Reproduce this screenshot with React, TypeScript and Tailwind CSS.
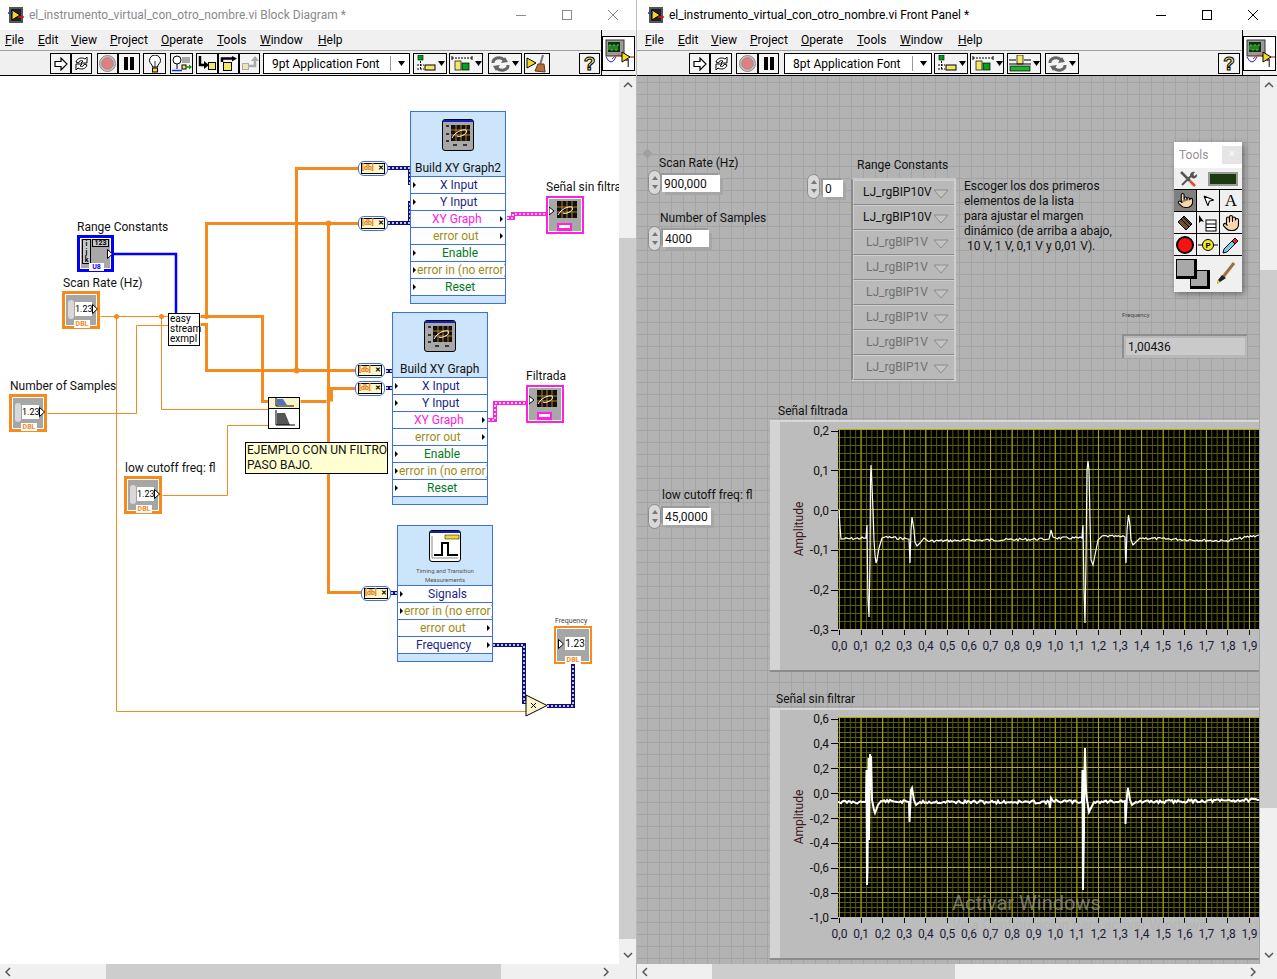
// App.tsx
import { ReactNode } from 'react';
import { Hand, MousePointer2, Pointer } from 'lucide-react';

const menus = [
  { name: 'File', width: 'w-[33px]' },
  { name: 'Edit', width: 'w-[33px]' },
  { name: 'View', width: 'w-[39px]' },
  { name: 'Project', width: 'w-[51px]' },
  { name: 'Operate', width: 'w-[56px]' },
  { name: 'Tools', width: 'w-[43px]' },
  { name: 'Window', width: 'w-[58px]' },
  { name: 'Help', width: 'w-[30px]' },
];

function Menu({ className }: { className: string }) {
  return (
    <div className={`flex h-[19px] items-center text-[12px] text-black ${className}`}>
      {menus.map((m) => (
        <span key={m.name} className={m.width}>
          <span className="underline">{m.name[0]}</span>
          {m.name.slice(1)}
        </span>
      ))}
    </div>
  );
}

function TitleBar({
  title,
  active,
  iconClass,
  controlsClass,
}: {
  title: string;
  active: boolean;
  iconClass: string;
  controlsClass: string;
}) {
  const c = active ? '#000000' : '#8a8a8a';
  return (
    <div className="flex h-[30px] shrink-0 items-center bg-white">
      <div className={iconClass}>
        <svg width="16" height="16" viewBox="0 0 16 16">
          <rect x="1" y="0" width="14" height="16" fill="#555" />
          <rect x="3" y="2" width="10" height="12" fill="#222" />
          <path d="M4 3v10l8-5z" fill="#f5d820" stroke="#000" />
          <path d="M0 6h5" stroke="#1030e0" strokeWidth="1.5" />
          <path d="M10 10h6" stroke="#e01010" strokeWidth="1.5" />
        </svg>
      </div>
      <span className="ml-[5px] grow text-[12px]" style={{ color: c }}>
        {title}
      </span>
      <svg width="110" height="14" viewBox="0 0 110 14" stroke={c} fill="none" className={`shrink-0 ${controlsClass}`}>
        <path d="M0 7.5h10" />
        <rect x="46.5" y="2.5" width="9" height="9" />
        <path d="M92 2l10 10M102 2l-10 10" />
      </svg>
    </div>
  );
}

function TB({ children, className = '' }: { children: ReactNode; className?: string }) {
  return (
    <div className={`flex h-[21px] items-center justify-center border border-black bg-[#f4f4f4] ${className}`}>
      {children}
    </div>
  );
}

const RunIcon = () => (
  <svg width="14" height="14" viewBox="0 0 14 14" fill="white" stroke="black" strokeWidth="1.2">
    <path d="M1 4.5h6V1l6 6-6 6V9.5H1z" />
  </svg>
);
const LoopIcon = () => (
  <svg width="17" height="17" viewBox="0 0 17 17" fill="white" stroke="black">
    <path d="M3 7c1-4 6-5 9-3l2-2v6H8l2-2c-2-1-4 0-4.500 2zM14 10c-1 4-6 5-9 3l-2 2V9h6l-2 2c2 1 4 0 4.500-2z" />
  </svg>
);
const RecordIcon = () => (
  <svg width="17" height="17" viewBox="0 0 17 17">
    <circle cx="8.5" cy="8.500" r="8" fill="#c4c4c4" stroke="#8a8a8a" />
    <circle cx="8.500" cy="8.500" r="5.800" fill="#e07f7f" stroke="#a88" />
  </svg>
);
const PauseIcon = () => (
  <svg width="12" height="13" viewBox="0 0 12 13" fill="black">
    <rect x="1" y="0" width="4" height="13" />
    <rect x="7" y="0" width="4" height="13" />
  </svg>
);
const BulbIcon = () => (
  <svg width="14" height="18" viewBox="0 0 14 18" fill="white" stroke="black">
    <path d="M4.500 12c0-3-3-3.500-3-6.500a5.500 5.500 0 0 1 11 0c0 3-3 3.500-3 6.500z" />
    <path d="M7 6v6" strokeWidth=".8" />
    <rect x="4.500" y="13" width="5" height="4" fill="#f5d820" />
  </svg>
);
const ProbeIcon = () => (
  <svg width="20" height="18" viewBox="0 0 20 18" fill="none">
    <circle cx="5" cy="5" r="4" fill="white" stroke="black" />
    <path d="M5 9v5" stroke="black" />
    <rect x="10" y="2" width="8" height="6" fill="#a8a8a8" />
    <rect x="10" y="10" width="4" height="4" fill="#f5e66a" stroke="black" />
    <path d="M0 15.500h10" stroke="#1030e0" strokeWidth="1.500" />
    <path d="M14 12h4" stroke="#109010" strokeWidth="1.500" />
    <path d="M17 9.500l3 2.500-3 2.500z" fill="#109010" />
  </svg>
);
const StepIn = () => (
  <svg width="18" height="16" viewBox="0 0 18 16">
    <path d="M2 0v9h5" fill="none" stroke="black" strokeWidth="2.500" />
    <path d="M6 5l5 4-5 4z" fill="black" />
    <rect x="10.500" y="6.500" width="7" height="7" fill="#f5e66a" stroke="black" />
  </svg>
);
const StepOver = () => (
  <svg width="18" height="16" viewBox="0 0 18 16">
    <path d="M2 6V2.500h12" fill="none" stroke="black" strokeWidth="2.500" />
    <path d="M12 0l5 2.500-5 3z" fill="black" />
    <rect x="3.500" y="6.500" width="8" height="8" fill="#f5e66a" stroke="black" />
  </svg>
);
const StepOut = () => (
  <svg width="18" height="16" viewBox="0 0 18 16">
    <path d="M8 10h6V4" fill="none" stroke="#aaa" strokeWidth="2.500" />
    <path d="M10 5l4-5 4 5z" fill="#aaa" />
    <rect x="1.500" y="7.500" width="6" height="6" fill="#eee6b0" stroke="#aaa" />
  </svg>
);
const Caret = () => (
  <svg width="7" height="5" viewBox="0 0 7 5" className="ml-[2px]">
    <path d="M0 0h7L3.500 5z" fill="black" />
  </svg>
);
const AlignIcon = () => (
  <svg width="20" height="17" viewBox="0 0 20 17">
    <rect x="2" y="0" width="5" height="5" fill="#00a020" stroke="black" strokeWidth=".6" />
    <path d="M4.500 6v8M1 10h7M1 14h7" stroke="black" strokeDasharray="2 1" />
    <rect x="9" y="10" width="10" height="5" fill="#f5e66a" stroke="black" />
  </svg>
);
const DistIcon = () => (
  <svg width="22" height="17" viewBox="0 0 22 17">
    <path d="M1 3h20" stroke="black" strokeDasharray="2 1" />
    <path d="M1 1v4M21 1v4" stroke="black" />
    <rect x="4" y="6" width="6" height="9" fill="#f5e66a" stroke="black" strokeWidth=".7" />
    <rect x="11" y="8" width="7" height="7" fill="#00a020" stroke="black" strokeWidth=".7" />
  </svg>
);
const ResizeIcon = () => (
  <svg width="22" height="17" viewBox="0 0 22 17">
    <rect x="8" y="0" width="6" height="9" fill="#f5e66a" stroke="black" strokeWidth=".7" />
    <path d="M0 5h7M22 5h-7M0 9h22" stroke="black" />
    <rect x="1" y="11" width="20" height="5" fill="#20b030" stroke="black" strokeWidth=".7" />
  </svg>
);
const ReorderIcon = () => (
  <svg width="19" height="16" viewBox="0 0 19 16">
    <path d="M2 7a6 5 0 0 1 11-3" fill="none" stroke="#666" strokeWidth="3" />
    <path d="M10 7l7-1-3-5z" fill="#666" />
    <path d="M17 9a6 5 0 0 1-11 3" fill="none" stroke="#666" strokeWidth="3" />
    <path d="M9 9l-7 1 3 5z" fill="#666" />
  </svg>
);
const CleanupIcon = () => (
  <svg width="22" height="18" viewBox="0 0 22 18">
    <path d="M1 3l9 5-9 5z" fill="#f5d820" stroke="black" />
    <path d="M17 0l-3 10" stroke="#777" strokeWidth="2" />
    <path d="M9 16l3-7h6l1 8z" fill="#b07040" stroke="#603810" />
  </svg>
);
const HelpIcon = () => (
  <span className="text-[19px] leading-none font-bold text-[#f2e27a] [-webkit-text-stroke:1px_black] [font-family:'Liberation_Sans',sans-serif]">
    ?
  </span>
);

function VIIcon() {
  return (
    <div className="relative h-[35px] w-[33px] border border-black bg-white">
      <svg width="31" height="33" viewBox="0 0 31 33">
        <rect x="3" y="3" width="18" height="16" fill="#9a9a9a" stroke="#333" />
        <rect x="5" y="5" width="12" height="10" fill="#103010" />
        <path d="M6 13V8h2v5h2V8h2v5h2V8h2" fill="none" stroke="#40d040" />
        <path d="M3 20q5 10 10 0" fill="none" stroke="#2020d0" />
        <path d="M9 22q7-8 12 0" fill="none" stroke="#e02020" />
        <path d="M19 15v10l8-5z" fill="#f5d820" stroke="#000" />
        <path d="M27 20h4" stroke="#b00000" />
      </svg>
      <span className="absolute right-[3px] bottom-0 text-[11px] leading-[13px] text-black">1</span>
    </div>
  );
}

function Trim({ children, className = '' }: { children: ReactNode; className?: string }) {
  return <div className={`flex items-center ${className}`}>{children}</div>;
}

function FontRing({ label, className }: { label: string; className: string }) {
  return (
    <div className={`flex h-[21px] items-center border border-black bg-white text-[12px] text-black ${className}`}>
      <span className="ml-[8px] grow whitespace-nowrap">{label}</span>
      <span className="flex h-[15px] w-[19px] items-center justify-center border-l border-[#999]">
        <Caret />
      </span>
    </div>
  );
}

function ScrollV({ thumb }: { thumb: ReactNode }) {
  return (
    <div className="flex w-[17px] shrink-0 flex-col items-center bg-[#f0f0f0]">
      <svg width="10" height="6" viewBox="0 0 10 6" className="mt-[6px] shrink-0">
        <path d="M1 5l4-4 4 4" fill="none" stroke="#555" strokeWidth="1.500" />
      </svg>
      {thumb}
      <svg width="10" height="6" viewBox="0 0 10 6" className="mb-[6px] shrink-0">
        <path d="M1 1l4 4 4-4" fill="none" stroke="#555" strokeWidth="1.500" />
      </svg>
    </div>
  );
}

function NumTerminal({ className }: { className: string }) {
  return (
    <div className={`absolute h-[38px] w-[38px] border-[3px] border-[#f58a1f] bg-white p-px ${className}`}>
      <div className="relative h-full w-full bg-[#a6a6a6]">
        <div className="absolute top-[5px] left-[2px] h-[19px] w-[6px] rounded-full bg-[#d8d8d8]" />
        <div className="absolute top-[7px] left-[9px] h-[14px] w-[17px] bg-white text-center text-[9px] leading-[14px] whitespace-nowrap text-black">
          1.23
        </div>
        <svg width="6" height="10" viewBox="0 0 6 10" className="absolute top-[9px] left-[26px]">
          <path d="M.5.5l5 4.500-5 4.500z" fill="white" stroke="black" />
        </svg>
        <div className="absolute bottom-[-3px] left-[8px] h-[8px] w-[16px] bg-white text-center text-[7px] leading-[8px] font-bold text-[#f58a1f]">
          DBL
        </div>
      </div>
    </div>
  );
}

function IndTerminal({ className }: { className: string }) {
  return (
    <div className={`absolute h-[38px] w-[38px] border-2 border-[#f58a1f] bg-white p-px ${className}`}>
      <div className="relative h-full w-full bg-[#a6a6a6]">
        <svg width="6" height="10" viewBox="0 0 6 10" className="absolute top-[10px] left-px">
          <path d="M.5.5l5 4.500-5 4.500z" fill="white" stroke="black" />
        </svg>
        <div className="absolute top-[8px] left-[8px] h-[13px] w-[20px] bg-white text-center text-[10px] leading-[13px] whitespace-nowrap text-black">
          1.23
        </div>
        <div className="absolute bottom-[-3px] left-[8px] h-[8px] w-[16px] bg-white text-center text-[7px] leading-[8px] font-bold text-[#f58a1f]">
          DBL
        </div>
      </div>
    </div>
  );
}

function GraphIcon({ className }: { className: string }) {
  return (
    <div className={`relative h-[32px] w-[32px] rounded-[3px] border border-black bg-[#a8a8a8] ${className}`}>
      <svg width="30" height="30" viewBox="0 0 30 30" className="absolute top-0 left-0">
        <rect x="0" y="0" width="30" height="2" fill="#1020c0" />
        <rect x="8" y="5" width="19" height="16" fill="#111" />
        <path d="M8 10h19M8 15h19M13 5v16M18 5v16M23 5v16" stroke="#e09a20" strokeWidth=".8" />
        <path d="M9 18c3-6 10-9 14-8 3 3-6 8-9 6" fill="none" stroke="white" />
        <path d="M3 6h3M3 14h3M3 21h3M10 25h4M20 25h4" stroke="#111" strokeWidth="1.500" />
      </svg>
    </div>
  );
}

function ExpressRow({ label, color, pin, ml }: { label: string; color: string; pin: 'l' | 'r'; ml: string }) {
  return (
    <div className="relative flex h-[17px] items-center overflow-hidden border-t border-[#3d6fe8] bg-white text-[12px] whitespace-nowrap">
      <span className={ml} style={{ color }}>
        {label}
      </span>
      {pin === 'l' ? (
        <span className="absolute top-[5px] left-[2px] h-0 w-0 border-y-[3px] border-l-[3px] border-y-transparent border-l-black" />
      ) : (
        <span className="absolute top-[5px] right-[2px] h-0 w-0 border-y-[3px] border-l-[3px] border-y-transparent border-l-black" />
      )}
    </div>
  );
}

function Convert({ className }: { className: string }) {
  return (
    <div className={`absolute flex h-[15px] w-[30px] items-center rounded-[6px] border border-[#3d6fe8] bg-white px-[2px] ${className}`}>
      <div className="flex h-[11px] w-[24px] items-center justify-between border border-black bg-[#fdf6c8] text-[7px] leading-none font-bold text-[#e07000]">
        <span>[db]</span>
        <span className="text-black">✕</span>
      </div>
    </div>
  );
}

function Wire({ d, w = 1 }: { d: string; w?: number }) {
  return <path d={d} fill="none" stroke="#f58a1f" strokeWidth={w} transform="translate(.5 .5)" />;
}

function Dyn({ d }: { d: string }) {
  return (
    <>
      <path d={d} fill="none" stroke="#101080" strokeWidth="4" />
      <path d={d} fill="none" stroke="white" strokeWidth="1.500" strokeDasharray="2 2" />
    </>
  );
}

function Pink({ d }: { d: string }) {
  return (
    <>
      <path d={d} fill="none" stroke="#ff20e0" strokeWidth="4" />
      <path d={d} fill="none" stroke="white" strokeWidth="1.500" strokeDasharray="2 2" />
    </>
  );
}

function GraphTerminal({ className }: { className: string }) {
  return (
    <div className={`absolute h-[38px] w-[38px] border-2 border-[#ff20e0] bg-white p-px ${className}`}>
      <div className="relative h-full w-full bg-[#a8a8a8]">
        <svg width="32" height="32" viewBox="0 0 32 32">
          <rect x="8" y="2" width="20" height="17" fill="#111" />
          <path d="M8 8h20M8 13h20M13 2v17M18 2v17M23 2v17" stroke="#e09a20" strokeWidth=".8" />
          <path d="M9 16c3-6 10-9 14-8 3 3-6 8-9 6" fill="none" stroke="white" />
          <path d="M0 10l5 4-5 4z" fill="white" stroke="black" transform="translate(0 -2)" />
          <rect x="8" y="24" width="15" height="8" fill="#ff20e0" />
          <rect x="10" y="26" width="11" height="3" fill="white" />
        </svg>
      </div>
    </div>
  );
}

function Diagram() {
  return (
    <div className="relative min-w-0 grow overflow-hidden bg-white text-[12px] text-[#111]">
      <svg width="620" height="888" viewBox="0 76 620 888" className="absolute top-0 left-0">
        <path d="M113 254H176V313" fill="none" stroke="#0000ff" strokeWidth="2.500" />
        <Wire d="M100 316H168M116 316V711H527M161 316V409H268M47 413H136V325H168M162 495H227V425H268" />
        <Wire w={3} d="M200 316H262V401H268M206 316V223H358M200 324H206V370H355M296 370V168H358M328 223V592H361" />
        <Wire w={3} d="M300 401H326M331 401V388H355" />
        <circle cx="116.500" cy="316.500" r="2.500" fill="#f58a1f" />
        <circle cx="161.500" cy="316.500" r="2.500" fill="#f58a1f" />
        <circle cx="206.500" cy="316.500" r="2.500" fill="#f58a1f" />
        <circle cx="296.500" cy="370.500" r="3" fill="#f58a1f" />
        <circle cx="328.500" cy="223.500" r="3" fill="#f58a1f" />
        <Dyn d="M388 168H410V185M388 223H410V201M386 371H392M386 388H392M391 593H397M493 645H524V702H527M547 706H573V664" />
        <Pink d="M507 218H513V214H546M488 420H495V403H526" />
      </svg>

      <span className="absolute top-[142px] left-[77px] whitespace-nowrap">Range Constants</span>
      <div className="absolute top-[159px] left-[77px] h-[37px] w-[37px] border-[3px] border-[#0000ff] bg-white p-px">
        <div className="relative h-full w-full bg-[#a8a8a8]">
          <div className="absolute top-0 left-px flex h-[25px] w-[9px] flex-col border border-black bg-[#c8c8c8] text-center text-[7px] leading-[8px] font-bold text-black">
            <span>i</span>
            <span>j</span>
            <span>k</span>
          </div>
          <div className="absolute top-0 left-[11px] h-[8px] w-[17px] border border-black bg-[#c4c4c4] text-center text-[7px] leading-[6px] font-bold text-black">
            123
          </div>
          <svg width="6" height="10" viewBox="0 0 6 10" className="absolute top-[10px] left-[26px]">
            <path d="M.5.5l5 4.500-5 4.500z" fill="white" stroke="black" />
          </svg>
          <div className="absolute bottom-[-3px] left-[8px] h-[8px] w-[15px] bg-white text-center text-[7px] leading-[8px] font-bold text-[#0000ff]">
            U8
          </div>
        </div>
      </div>

      <span className="absolute top-[198px] left-[63px] whitespace-nowrap">Scan Rate (Hz)</span>
      <NumTerminal className="top-[215px] left-[62px]" />
      <span className="absolute top-[301px] left-[10px] whitespace-nowrap">Number of Samples</span>
      <NumTerminal className="top-[318px] left-[9px]" />
      <span className="absolute top-[383px] left-[125px] whitespace-nowrap">low cutoff freq: fl</span>
      <NumTerminal className="top-[400px] left-[124px]" />

      <div className="absolute top-[237px] left-[168px] h-[33px] w-[32px] border border-black bg-white pl-px text-[10px] leading-[10px] text-black">
        easy
        <br />
        stream
        <br />
        exmpl
      </div>

      <div className="absolute top-[321px] left-[268px] h-[32px] w-[32px] border border-black bg-white">
        <div className="h-[11px] border-b border-black bg-[#f8f4c8]">
          <svg width="30" height="10" viewBox="0 0 30 10">
            <path d="M8 1h6l4 6H8z" fill="#5070c0" />
            <path d="M7 0v8h18" fill="none" stroke="black" />
          </svg>
        </div>
        <svg width="30" height="19" viewBox="0 0 30 19">
          <path d="M8 4h8l5 12H8z" fill="#555" />
          <path d="M7 1v15h19" fill="none" stroke="black" />
        </svg>
      </div>

      <div className="absolute top-[366px] left-[245px] h-[32px] w-[143px] overflow-hidden border border-black bg-[#ffffd2] pl-px text-[12px] leading-[15px] whitespace-nowrap text-[#111]">
        EJEMPLO CON UN FILTRO
        <br />
        PASO BAJO.
      </div>

      <div className="absolute top-[35px] left-[410px] flex h-[193px] w-[96px] flex-col border border-[#3d6fe8] bg-[#cce5fb]">
        <GraphIcon className="mt-[7px] ml-[31px] shrink-0" />
        <div className="flex h-[25px] items-end pl-[4px] text-[12px] leading-[16px] whitespace-nowrap">Build XY Graph2</div>
        <ExpressRow label="X Input" color="#1b1f8c" pin="l" ml="ml-[29px]" />
        <ExpressRow label="Y Input" color="#1b1f8c" pin="l" ml="ml-[29px]" />
        <ExpressRow label="XY Graph" color="#ff20e0" pin="r" ml="ml-[21px]" />
        <ExpressRow label="error out" color="#9c8d18" pin="r" ml="ml-[22px]" />
        <ExpressRow label="Enable" color="#007a20" pin="l" ml="ml-[31px]" />
        <ExpressRow label="error in (no error)" color="#9c8d18" pin="l" ml="ml-[6px]" />
        <ExpressRow label="Reset" color="#007a20" pin="l" ml="ml-[34px]" />
        <div className="h-[8px] border-t border-[#3d6fe8]" />
      </div>

      <div className="absolute top-[236px] left-[392px] flex h-[193px] w-[96px] flex-col border border-[#3d6fe8] bg-[#cce5fb]">
        <GraphIcon className="mt-[7px] ml-[31px] shrink-0" />
        <div className="flex h-[25px] items-end pl-[7px] text-[12px] leading-[16px] whitespace-nowrap">Build XY Graph</div>
        <ExpressRow label="X Input" color="#1b1f8c" pin="l" ml="ml-[29px]" />
        <ExpressRow label="Y Input" color="#1b1f8c" pin="l" ml="ml-[29px]" />
        <ExpressRow label="XY Graph" color="#ff20e0" pin="r" ml="ml-[21px]" />
        <ExpressRow label="error out" color="#9c8d18" pin="r" ml="ml-[22px]" />
        <ExpressRow label="Enable" color="#007a20" pin="l" ml="ml-[31px]" />
        <ExpressRow label="error in (no error)" color="#9c8d18" pin="l" ml="ml-[6px]" />
        <ExpressRow label="Reset" color="#007a20" pin="l" ml="ml-[34px]" />
        <div className="h-[8px] border-t border-[#3d6fe8]" />
      </div>

      <div className="absolute top-[449px] left-[397px] flex h-[137px] w-[96px] flex-col border border-[#3d6fe8] bg-[#cce5fb]">
        <div className="relative mt-[4px] ml-[31px] h-[32px] w-[32px] shrink-0 rounded-[3px] border border-black bg-white">
          <svg width="30" height="30" viewBox="0 0 30 30">
            <rect x="0" y="0" width="30" height="2" fill="#1020c0" />
            <rect x="15" y="4" width="14" height="4" fill="#f5d820" stroke="black" strokeWidth=".5" />
            <path d="M4 24H12V12H18V24H28" fill="none" stroke="black" strokeWidth="2" />
            <path d="M2 5V27H28" fill="none" stroke="#888" />
          </svg>
        </div>
        <div className="mt-[4px] h-[18px] shrink-0 text-center text-[6px] leading-[9px] text-[#555]">
          Timing and Transition
          <br />
          Measurements
        </div>
        <div className="h-[1px] shrink-0" />
        <ExpressRow label="Signals" color="#1b1f8c" pin="l" ml="ml-[30px]" />
        <ExpressRow label="error in (no error)" color="#9c8d18" pin="l" ml="ml-[6px]" />
        <ExpressRow label="error out" color="#9c8d18" pin="r" ml="ml-[22px]" />
        <ExpressRow label="Frequency" color="#1b1f8c" pin="r" ml="ml-[18px]" />
        <div className="h-[8px] border-t border-[#3d6fe8]" />
      </div>

      <Convert className="top-[85px] left-[358px]" />
      <Convert className="top-[140px] left-[358px]" />
      <Convert className="top-[287px] left-[355px]" />
      <Convert className="top-[305px] left-[355px]" />
      <Convert className="top-[510px] left-[361px]" />

      <span className="absolute top-[102px] left-[546px] whitespace-nowrap">Señal sin filtra</span>
      <GraphTerminal className="top-[120px] left-[546px]" />
      <span className="absolute top-[291px] left-[526px] whitespace-nowrap">Filtrada</span>
      <GraphTerminal className="top-[309px] left-[526px]" />

      <span className="absolute top-[540px] left-[555px] text-[7px] whitespace-nowrap text-[#444]">Frequency</span>
      <IndTerminal className="top-[550px] left-[554px]" />

      <svg width="24" height="24" viewBox="0 0 24 24" className="absolute top-[618px] left-[525px]">
        <path d="M1 1v21l21-10.500z" fill="#fdf6c8" stroke="black" />
        <path d="M6 9l5 5M11 9l-5 5" stroke="black" />
      </svg>
    </div>
  );
}

function Spin({ className }: { className: string }) {
  return (
    <div className={`absolute flex h-[25px] w-[13px] flex-col items-center justify-around rounded-full border border-[#8c8c8c] bg-[#d8d8d8] py-[2px] ${className}`}>
      <span className="h-0 w-0 border-x-[3px] border-b-[4px] border-x-transparent border-b-[#777]" />
      <span className="h-0 w-0 border-x-[3px] border-t-[4px] border-x-transparent border-t-[#777]" />
    </div>
  );
}

function Field({ value, className }: { value: string; className: string }) {
  return (
    <div className={`absolute h-[17px] bg-white pl-[2px] text-[12px] leading-[18px] text-[#111] shadow-[-2px_-2px_0_#9a9a9a,3px_3px_0_#a6a6a6] ${className}`}>
      {value}
    </div>
  );
}

function Ring({ label, on }: { label: string; on: boolean }) {
  return (
    <div className="flex h-[25px] shrink-0 items-center border-t border-l border-[#cfcfcf] border-r-[#777] border-b border-b-[#8a8a8a] bg-[#b9b9b9] pb-[2px] text-[12px]">
      <span className={on ? 'ml-[9px] grow text-[#111]' : 'ml-[12px] grow text-[#707070]'}>{label}</span>
      <svg width="16" height="10" viewBox="0 0 16 10" className="mt-[5px] mr-[5px]">
        <path d="M1 1h14L8 9z" fill="#c4c4c4" stroke="#8a8a8a" />
      </svg>
    </div>
  );
}

function seeded(seed: number) {
  let s = seed;
  return () => {
    s = (s * 9301 + 49297) % 233280;
    return s / 233280;
  };
}

// anchor points give the beats; the flat parts get a bit of noise
function trace(anchors: number[][], amp: number, seed: number) {
  const rnd = seeded(seed);
  const pts: string[] = [];
  for (let i = 0; i < anchors.length - 1; i++) {
    const [x0, y0] = anchors[i];
    const [x1, y1] = anchors[i + 1];
    pts.push(`${x0},${y0}`);
    if (x1 - x0 > 6) {
      for (let x = x0 + 1.500; x < x1 - 1; x += 1.500) {
        const t = (x - x0) / (x1 - x0);
        pts.push(`${x},${(y0 + (y1 - y0) * t + (rnd() - 0.500) * amp).toFixed(1)}`);
      }
    }
  }
  const last = anchors[anchors.length - 1];
  pts.push(`${last[0]},${last[1]}`);
  return pts.join(' ');
}

const filtered = [
  [839, 510], [840, 527], [841, 539], [866, 538], [867, 525], [867.500, 570], [868, 600], [869, 617], [870, 560],
  [870.500, 480], [871, 465], [871.500, 475], [873, 510], [874, 540], [875, 555], [876, 563], [877, 560], [879, 548],
  [882, 538], [885, 537], [909, 539], [910, 563], [911, 530], [912, 517], [914, 530], [915, 542], [917, 546],
  [920, 543], [924, 538], [928, 541], [1049, 539], [1050, 535], [1051, 530], [1053, 537], [1056, 538], [1082, 538],
  [1083, 525], [1084, 590], [1085, 623], [1086, 560], [1087, 470], [1088, 461], [1089, 470], [1090, 520], [1091, 560],
  [1093, 565], [1095, 555], [1098, 540], [1102, 536], [1125, 537], [1125.500, 556], [1126, 563], [1127, 530],
  [1128.500, 515], [1130, 525], [1131, 540], [1133, 545], [1137, 541], [1140, 538], [1225, 541], [1259, 535],
];

const unfiltered = [
  [838, 802], [866, 802], [866.500, 770], [867, 885], [867.500, 870], [868, 800], [868.500, 758], [869, 840], [870, 754],
  [870.500, 790], [871, 756], [872, 800], [874, 810], [875, 813], [878, 805], [881, 801], [909, 802], [909.500, 822],
  [911, 790], [912, 788], [914, 800], [916, 805], [920, 802], [1049, 802], [1050, 808], [1051, 798], [1053, 801],
  [1082, 802], [1082.500, 770], [1083, 890], [1084, 830], [1084.500, 770], [1085, 748], [1086, 790], [1087, 800],
  [1089, 812], [1091, 808], [1094, 802], [1125, 801], [1125.500, 824], [1127, 795], [1128, 788], [1130, 800],
  [1132, 805], [1136, 802], [1259, 800],
];

const xVals = Array.from({ length: 20 }, (_, i) => i);

function Plot({ points, yTicks, top, w }: { points: string; yTicks: number; top: number; w: number }) {
  const h = 200;
  const left = 838;
  const minorV = Array.from({ length: 80 }, (_, i) => i);
  const minorH = Array.from({ length: (yTicks - 1) * 5 + 1 }, (_, i) => i);
  const step = h / (yTicks - 1);
  return (
    <svg width="421" height={h} viewBox={`${left} ${top} 421 ${h}`} className="block bg-black">
      {minorV.map((i) => (
        <line key={i} x1={839.5 + i * 5.395} x2={839.5 + i * 5.395} y1={top} y2={top + h} stroke="#5c5c00" />
      ))}
      {minorH.map((i) => (
        <line key={i} y1={top + 0.5 + (i * step) / 5} y2={top + 0.5 + (i * step) / 5} x1={left} x2={left + 421} stroke="#5c5c00" />
      ))}
      {xVals.map((i) => (
        <line key={i} x1={839.5 + i * 21.58} x2={839.5 + i * 21.58} y1={top} y2={top + h} stroke="#b0b000" />
      ))}
      {Array.from({ length: yTicks }, (_, i) => i).map((i) => (
        <line key={i} y1={top + 0.5 + i * step} y2={top + 0.5 + i * step} x1={left} x2={left + 421} stroke="#b0b000" />
      ))}
      <polyline points={points} fill="none" stroke="white" strokeWidth={w} />
    </svg>
  );
}

function Graph({
  className,
  yLabels,
  points,
  top,
  w,
}: {
  className: string;
  yLabels: string[];
  points: string;
  top: number;
  w: number;
}) {
  const step = 199 / (yLabels.length - 1);
  return (
    <div className={`absolute h-[252px] w-[489px] overflow-hidden border-y-2 border-t-[#d8d8d8] border-b-[#8c8c8c] bg-[#bcbcbc] ${className}`}>
      <div className="absolute top-0 bottom-0 left-0 w-[10px] bg-[#d4d4d4]" />
      <span className="absolute top-[98px] left-[2px] -rotate-90 text-[12px] whitespace-nowrap text-[#3a1a20]">Amplitude</span>
      {yLabels.map((l, i) => (
        <div key={l} className="absolute right-[421px] flex h-[16px] items-center gap-[2px] text-[12px] text-[#111]" style={{ top: 1 + i * step }}>
          {l}
          <span className="h-px w-[7px] bg-black" />
        </div>
      ))}
      <div className="absolute top-[7px] left-[68px]">
        <Plot points={points} yTicks={yLabels.length} top={top} w={w} />
      </div>
      {xVals.map((i) => (
        <div key={i} className="absolute top-[208px] flex w-[21px] flex-col items-center text-[12px] leading-[15px] text-[#1a1a3a]" style={{ left: 59 + i * 21.58 }}>
          <span className="h-[5px] w-px bg-black" />
          <span className="mt-[4px]">{`${Math.floor(i / 10)},${i % 10}`}</span>
        </div>
      ))}
    </div>
  );
}

function ToolBtn({ children, selected = false }: { children: ReactNode; selected?: boolean }) {
  return (
    <div className={`flex h-[21px] items-center justify-center ${selected ? 'bg-[#808080]' : 'bg-[#f0f0f0]'}`}>
      {children}
    </div>
  );
}

function ToolsPalette() {
  return (
    <div className="absolute top-[66px] left-[537px] flex h-[150px] w-[68px] flex-col bg-[#f0f0f0] shadow-[2px_2px_6px_rgba(0,0,0,0.4)]">
      <div className="flex h-[26px] shrink-0 items-center justify-between bg-white pl-[5px] text-[12px] text-[#9a8f9a]">
        Tools
        <span className="flex h-[18px] w-[20px] items-center justify-center bg-[#e5e5e5] text-[9px] text-white">✕</span>
      </div>
      <div className="flex h-[22px] shrink-0 items-center justify-around border-b border-black">
        <svg width="20" height="18" viewBox="0 0 20 18" fill="none">
          <path d="M3 15L14 4" stroke="#555" strokeWidth="2" />
          <path d="M11 5a3.500 3.500 0 0 1 5-3l-2 2.500 1.500 1.500 2.500-2a3.500 3.500 0 0 1-5 4z" fill="#555" />
          <path d="M2 2l9 9" stroke="#555" strokeWidth="2.500" />
          <path d="M11 11l5 5" stroke="#e05020" strokeWidth="2.500" />
        </svg>
        <div className="h-[14px] w-[30px] border-2 border-[#9a9a9a] bg-[#1c3a10]" />
      </div>
      <div className="grid shrink-0 grid-cols-3 gap-x-px gap-y-px bg-black pb-px">
        <ToolBtn selected>
          <Pointer size={17} fill="#fcd5a8" strokeWidth={1.500} color="black" />
        </ToolBtn>
        <ToolBtn>
          <MousePointer2 size={13} fill="white" color="black" />
        </ToolBtn>
        <ToolBtn>
          <span className="text-[17px] leading-none [font-family:'Liberation_Serif',serif] text-black">A</span>
        </ToolBtn>
        <ToolBtn>
          <svg width="18" height="18" viewBox="0 0 18 18">
            <path d="M2 8l6-6 8 8-6 6z" fill="#6a5030" stroke="black" />
            <path d="M5 5l8 8M7 3l8 8" stroke="black" />
          </svg>
        </ToolBtn>
        <ToolBtn>
          <svg width="20" height="18" viewBox="0 0 20 18">
            <path d="M1 1v8l2-2 3 1z" fill="black" />
            <rect x="8" y="6" width="10" height="11" fill="white" stroke="black" />
            <path d="M8 10h10M8 13.500h10" stroke="black" />
          </svg>
        </ToolBtn>
        <ToolBtn>
          <Hand size={18} fill="#fcd5a8" strokeWidth={1.500} color="black" />
        </ToolBtn>
        <ToolBtn>
          <svg width="20" height="20" viewBox="0 0 20 20">
            <circle cx="10" cy="10" r="8" fill="#ff1010" stroke="black" strokeWidth="2" />
          </svg>
        </ToolBtn>
        <ToolBtn>
          <svg width="20" height="14" viewBox="0 0 20 14">
            <path d="M0 7h20" stroke="black" />
            <circle cx="10" cy="7" r="5.500" fill="#f5e820" stroke="black" />
            <text x="10" y="10" textAnchor="middle" fontSize="8" fontWeight="bold">
              P
            </text>
          </svg>
        </ToolBtn>
        <ToolBtn>
          <svg width="18" height="18" viewBox="0 0 18 18">
            <path d="M1 17l1-4 8-8 3 3-8 8z" fill="#7ec8f0" stroke="black" />
            <path d="M10 5l3-3 3 3-3 3z" fill="#e02030" stroke="black" />
          </svg>
        </ToolBtn>
      </div>
      <div className="flex grow items-center gap-[2px] pl-[2px]">
        <div className="relative h-[30px] w-[34px]">
          <div className="absolute top-[11px] left-[14px] h-[19px] w-[20px] border border-r-[3px] border-b-[3px] border-black bg-[#a8a8a8]" />
          <div className="absolute top-0 left-0 h-[20px] w-[21px] border border-r-[3px] border-b-[3px] border-black bg-[#a8a8a8]" />
        </div>
        <svg width="24" height="24" viewBox="0 0 24 24">
          <path d="M22 1L11 15" stroke="#a07040" strokeWidth="3" />
          <path d="M10 13l4 3-9 6 1-4z" fill="#222" />
          <path d="M5 22l1-4 2 2z" fill="#f5e820" />
        </svg>
      </div>
    </div>
  );
}

function FrontPanel() {
  return (
    <div className="relative min-w-0 grow overflow-hidden bg-[#b3b3b3] bg-[linear-gradient(#a4a4a4_1px,transparent_1px),linear-gradient(90deg,#a4a4a4_1px,transparent_1px)] bg-[size:12px_12px] bg-[position:10px_6px] text-[12px] text-[#111]">
      <span className="absolute top-[74px] left-[7px] h-[7px] w-[7px] rotate-45 bg-[#a0a0a0]" />
      <span className="absolute top-[78px] left-[22px] whitespace-nowrap">Scan Rate (Hz)</span>
      <Spin className="top-[94px] left-[11px]" />
      <Field value="900,000" className="top-[99px] left-[25px] w-[58px]" />
      <span className="absolute top-[133px] left-[23px] whitespace-nowrap">Number of Samples</span>
      <Spin className="top-[150px] left-[11px]" />
      <Field value="4000" className="top-[154px] left-[26px] w-[46px]" />

      <span className="absolute top-[80px] left-[220px] whitespace-nowrap">Range Constants</span>
      <Spin className="top-[98px] left-[170px]" />
      <Field value="0" className="top-[104px] left-[186px] w-[20px]" />
      <div className="absolute top-[102px] left-[214px] flex h-[203px] w-[105px] flex-col border-2 border-t-[#c8c8c8] border-r-[#cfcfcf] border-b-[#cfcfcf] border-l-[#8a8a8a] bg-[#a4a4a4]">
        <Ring label="LJ_rgBIP10V" on />
        <Ring label="LJ_rgBIP10V" on />
        <Ring label="LJ_rgBIP1V" on={false} />
        <Ring label="LJ_rgBIP1V" on={false} />
        <Ring label="LJ_rgBIP1V" on={false} />
        <Ring label="LJ_rgBIP1V" on={false} />
        <Ring label="LJ_rgBIP1V" on={false} />
        <Ring label="LJ_rgBIP1V" on={false} />
      </div>
      <div className="absolute top-[103px] left-[327px] text-[12px] leading-[15px] whitespace-pre text-[#111]">
        {'Escoger los dos primeros\nelementos de la lista\npara ajustar el margen\ndinámico (de arriba a abajo,\n 10 V, 1 V, 0,1 V y 0,01 V).'}
      </div>

      <ToolsPalette />

      <span className="absolute top-[234px] left-[485px] text-[6px] whitespace-nowrap text-[#444]">Frequency</span>
      <div className="absolute top-[258px] left-[485px] h-[24px] w-[125px] border-t-2 border-l-2 border-[#8f8f8f] bg-[#b8b8b8] p-[2px]">
        <div className="h-[17px] w-[119px] bg-[#cacaca] pl-[2px] text-[12px] leading-[19px] text-[#111]">1,00436</div>
      </div>

      <span className="absolute top-[410px] left-[25px] whitespace-nowrap">low cutoff freq: fl</span>
      <Spin className="top-[428px] left-[11px]" />
      <Field value="45,0000" className="top-[432px] left-[26px] w-[48px]" />

      <span className="absolute top-[326px] left-[141px] whitespace-nowrap">Señal filtrada</span>
      <Graph
        className="top-[344px] left-[133px]"
        yLabels={['0,2', '0,1', '0,0', '-0,1', '-0,2', '-0,3']}
        points={trace(filtered, 2.500, 7)}
        top={429}
        w={1.200}
      />
      <span className="absolute top-[614px] left-[139px] whitespace-nowrap">Señal sin filtrar</span>
      <Graph
        className="top-[632px] left-[133px]"
        yLabels={['0,6', '0,4', '0,2', '0,0', '-0,2', '-0,4', '-0,6', '-0,8', '-1,0']}
        points={trace(unfiltered, 3, 11)}
        top={717}
        w={2}
      />

      <span className="absolute top-[812px] left-[315px] text-[20px] whitespace-nowrap text-[#a0a0a0]/70">Activar Windows</span>
      <span className="absolute top-[839px] left-[315px] text-[14px] whitespace-nowrap text-[#a0a0a0]/25">
        Ve a Configuración para activar Windows
      </span>
    </div>
  );
}

function ScrollH({ children }: { children: ReactNode }) {
  return (
    <div className="flex h-[15px] shrink-0 items-center bg-[#f0f0f0]">
      <svg width="6" height="10" viewBox="0 0 6 10" className="mr-[5px] ml-[5px] shrink-0">
        <path d="M5 1L1 5l4 4" fill="none" stroke="#555" strokeWidth="1.500" />
      </svg>
      {children}
    </div>
  );
}

export default function App() {
  return (
    <div className="flex h-[979px] w-[1277px] overflow-hidden bg-white [font-family:Roboto,'Noto_Sans',sans-serif]">
      <div className="flex w-[637px] shrink-0 flex-col border-r border-[#bbb]">
        <TitleBar
          title="el_instrumento_virtual_con_otro_nombre.vi Block Diagram *"
          active={false}
          iconClass="ml-[8px]"
          controlsClass="mr-[10px]"
        />
        <div className="relative flex h-[45px] shrink-0 bg-[#f0f0f0]">
          <div className="flex min-w-0 grow flex-col border-r border-black">
            <div className="h-[21px] shrink-0 border-b border-[#a0a0a0]">
              <Menu className="ml-[5px]" />
            </div>
            <Trim className="mt-[2px] ml-[50px]">
              <TB className="w-[21px]"><RunIcon /></TB>
              <TB className="w-[21px]"><LoopIcon /></TB>
              <TB className="ml-[5px] w-[21px] border-[#c4c4c4]"><RecordIcon /></TB>
              <TB className="w-[22px]"><PauseIcon /></TB>
              <TB className="ml-[3px] w-[23px]"><BulbIcon /></TB>
              <TB className="ml-[4px] w-[23px]"><ProbeIcon /></TB>
              <TB className="ml-[3px] w-[22px]"><StepIn /></TB>
              <TB className="w-[21px]"><StepOver /></TB>
              <TB className="w-[21px] border-[#c4c4c4]"><StepOut /></TB>
              <FontRing label="9pt Application Font" className="ml-[3px] w-[147px]" />
              <TB className="ml-[3px] w-[34px]"><AlignIcon /><Caret /></TB>
              <TB className="ml-[2px] w-[34px]"><DistIcon /><Caret /></TB>
              <TB className="ml-[5px] w-[34px]"><ReorderIcon /><Caret /></TB>
              <TB className="ml-[2px] w-[26px]"><CleanupIcon /></TB>
              <TB className="ml-[29px] w-[21px]"><HelpIcon /></TB>
            </Trim>
          </div>
          <div className="w-[34px] shrink-0 pt-[6px]">
            <VIIcon />
          </div>
        </div>
        <div className="h-px shrink-0 bg-black" />
        <div className="flex min-h-0 grow">
          <Diagram />
          <ScrollV
            thumb={
              <div className="mt-[150px] mb-[13px] flex w-full grow flex-col">
                <div className="grow bg-[#cdcdcd]" />
              </div>
            }
          />
        </div>
        <ScrollH>
          <div className="ml-[90px] h-full w-[395px] bg-[#cdcdcd]" />
          <div className="grow" />
          <svg width="6" height="10" viewBox="0 0 6 10" className="mr-[27px] shrink-0">
            <path d="M1 1l4 4-4 4" fill="none" stroke="#555" strokeWidth="1.500" />
          </svg>
        </ScrollH>
      </div>

      <div className="flex w-[640px] shrink-0 flex-col">
        <TitleBar
          title="el_instrumento_virtual_con_otro_nombre.vi Front Panel *"
          active
          iconClass="ml-[11px]"
          controlsClass="mr-[11px]"
        />
        <div className="relative flex h-[45px] shrink-0 bg-[#f0f0f0]">
          <div className="flex min-w-0 grow flex-col border-r border-black">
            <div className="h-[21px] shrink-0 border-b border-[#a0a0a0]">
              <Menu className="ml-[8px]" />
            </div>
            <Trim className="mt-[2px] ml-[52px]">
              <TB className="w-[21px]"><RunIcon /></TB>
              <TB className="w-[22px]"><LoopIcon /></TB>
              <TB className="ml-[4px] w-[22px] border-[#c4c4c4]"><RecordIcon /></TB>
              <TB className="w-[21px]"><PauseIcon /></TB>
              <FontRing label="8pt Application Font" className="ml-[5px] w-[148px]" />
              <TB className="ml-[2px] w-[34px]"><AlignIcon /><Caret /></TB>
              <TB className="ml-[2px] w-[34px]"><DistIcon /><Caret /></TB>
              <TB className="ml-[3px] w-[34px]"><ResizeIcon /><Caret /></TB>
              <TB className="ml-[4px] w-[34px]"><ReorderIcon /><Caret /></TB>
              <TB className="ml-[139px] w-[22px]"><HelpIcon /></TB>
            </Trim>
          </div>
          <div className="w-[34px] shrink-0 pt-[6px]">
            <VIIcon />
          </div>
        </div>
        <div className="h-px shrink-0 bg-black" />
        <div className="flex min-h-0 grow">
          <FrontPanel />
          <ScrollV
            thumb={
              <div className="mt-[182px] mb-[144px] flex w-full grow flex-col">
                <div className="grow bg-[#cdcdcd]" />
              </div>
            }
          />
        </div>
        <ScrollH>
          <div className="ml-[59px] h-full w-[243px] bg-[#cdcdcd]" />
          <div className="grow" />
          <svg width="6" height="10" viewBox="0 0 6 10" className="mr-[21px] shrink-0">
            <path d="M1 1l4 4-4 4" fill="none" stroke="#555" strokeWidth="1.500" />
          </svg>
        </ScrollH>
      </div>
    </div>
  );
}
